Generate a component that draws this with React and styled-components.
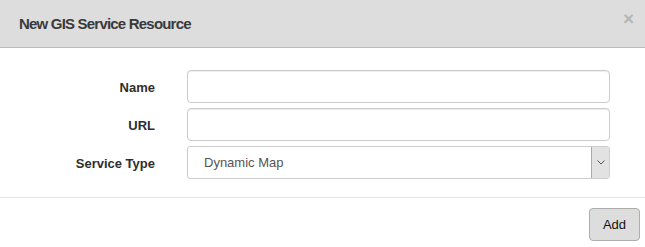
import React from "react";
import styled, { createGlobalStyle } from "styled-components";

const GlobalStyle = createGlobalStyle`
  body {
    margin: 0;
    background: #fff;
    font-family: "Liberation Sans", Arial, sans-serif;
  }
`;

const Modal = styled.div`
  width: 645px;
  height: 247px;
  background: #fff;
  overflow: hidden;
`;

const Header = styled.div`
  height: 47px;
  display: flex;
  align-items: center;
  justify-content: space-between;
  padding: 0 11px 0 19px;
  background: #dddddd;
  border-bottom: 1px solid #bcbcbc;
`;

const Title = styled.h4`
  margin: 0;
  font-size: 15px;
  font-weight: bold;
  letter-spacing: -0.8px;
  color: #3a3a3a;
`;

const Close = styled.button`
  border: none;
  background: none;
  padding: 0;
  margin-top: -11px;
  font-family: "Liberation Sans", Arial, sans-serif;
  font-size: 19px;
  font-weight: bold;
  line-height: 1;
  color: #b5b5b5;
  cursor: pointer;
`;

const Body = styled.form`
  display: grid;
  grid-template-columns: 155px 423px;
  column-gap: 32px;
  row-gap: 5px;
  padding: 22px 35px 18px 0;
`;

const Label = styled.label`
  align-self: center;
  padding-top: 2px;
  text-align: right;
  font-size: 13px;
  font-weight: bold;
  color: #2e2e2e;
`;

const Input = styled.input`
  box-sizing: border-box;
  height: 33px;
  width: 100%;
  padding: 6px 12px;
  border: 1px solid #cccccc;
  border-radius: 4px;
  box-shadow: inset 0 1px 1px rgba(0, 0, 0, 0.075);
  font-family: inherit;
  font-size: 13px;
  outline: none;
`;

const Select = styled.div`
  box-sizing: border-box;
  height: 33px;
  display: flex;
  align-items: stretch;
  border: 1px solid #cccccc;
  border-radius: 3px;
  overflow: hidden;
`;

const SelectValue = styled.span`
  flex: 1;
  display: flex;
  align-items: center;
  padding-left: 16px;
  font-size: 13px;
  color: #555;
`;

const Arrow = styled.span`
  width: 17px;
  display: flex;
  align-items: center;
  justify-content: center;
  background: #e2e2e2;
  border-left: 1px solid #a9a9a9;
`;

const Footer = styled.div`
  display: flex;
  justify-content: flex-end;
  padding: 10px 5px 0;
  border-top: 1px solid #e5e5e5;
`;

const Button = styled.button`
  width: 51px;
  height: 33px;
  padding: 0;
  background: #dddddd;
  border: 1px solid #adadad;
  border-radius: 4px;
  font-family: "Liberation Sans", Arial, sans-serif;
  font-size: 13px;
  color: #111;
  cursor: pointer;
`;

const App = () => {
  return (
    <Modal>
      <GlobalStyle />
      <Header>
        <Title>New GIS Service Resource</Title>
        <Close type="button">×</Close>
      </Header>
      <Body>
        <Label>Name</Label>
        <Input type="text" />
        <Label>URL</Label>
        <Input type="text" />
        <Label>Service Type</Label>
        <Select>
          <SelectValue>Dynamic Map</SelectValue>
          <Arrow>
            <svg width="8" height="5" viewBox="0 0 8 5">
              <path d="M0.5 0.5 L4 4 L7.5 0.5" fill="none" stroke="#555" strokeWidth="1" />
            </svg>
          </Arrow>
        </Select>
      </Body>
      <Footer>
        <Button type="button">Add</Button>
      </Footer>
    </Modal>
  );
};

export default App;
